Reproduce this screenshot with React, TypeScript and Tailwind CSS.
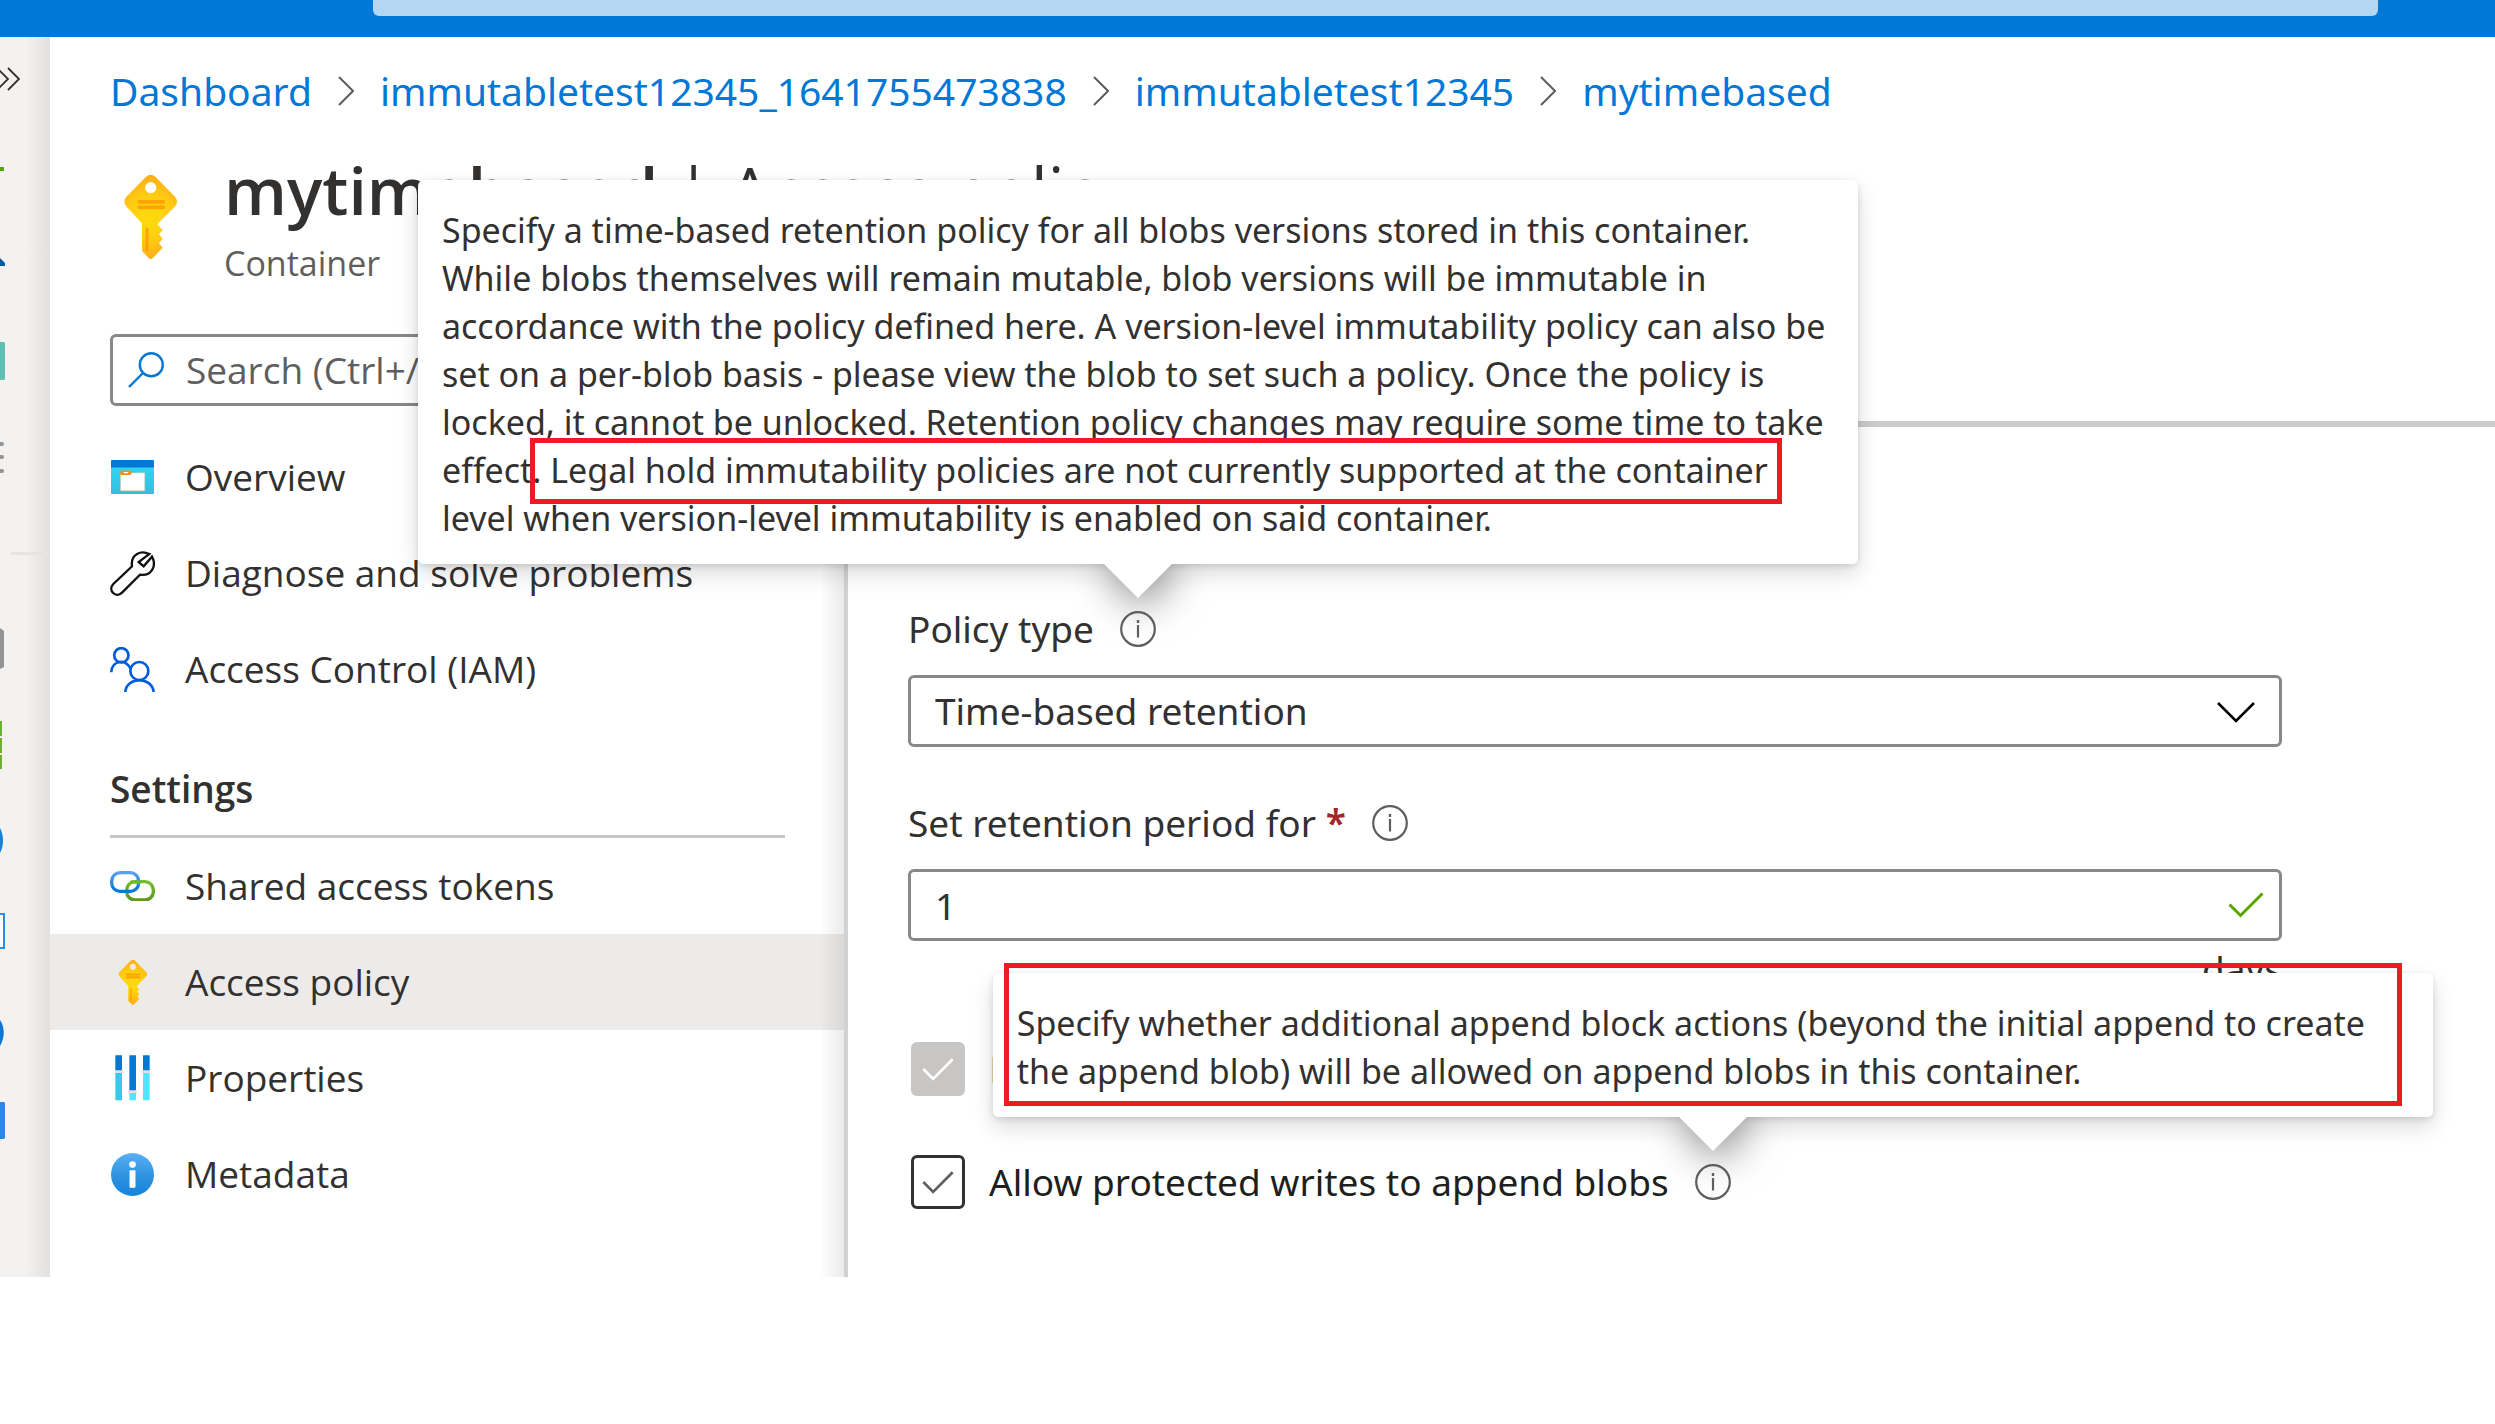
import { useState } from "react";
import type { ReactNode } from "react";

function KeyIcon({ id, className }: { id: string; className: string }) {
  return (
    <svg viewBox="0 0 84 84" className={className} aria-hidden="true">
      <defs>
        <radialGradient id={id} gradientUnits="userSpaceOnUse" cx="42" cy="42" r="42">
          <stop offset="0.25" stopColor="#ffd70f" />
          <stop offset="0.55" stopColor="#ffcb12" />
          <stop offset="1" stopColor="#feac19" />
        </radialGradient>
      </defs>
      <path
        fill={`url(#${id})`}
        fillRule="evenodd"
        d="M38 1.8a6.600 6.600 0 0 1 9.400 0L67 21.800a6.800 6.800 0 0 1 0 9.600L50 48.500v1.500l4.700 5-3.700 4.200 3.700 4.600-3.700 4.400 3.700 4.600L45 82.800a3.200 3.200 0 0 1-4.600 0L34 76V48.500L18.400 31.400a6.800 6.800 0 0 1 0-9.600ZM42.700 7a5.600 5.600 0 1 0 0 11.200 5.600 5.600 0 0 0 0-11.200Z"
      />
      <rect x="29.500" y="25" width="27.500" height="3.800" rx="1.800" fill="#ff9300" opacity="0.75" />
      <rect x="29.500" y="30.500" width="27.500" height="3.800" rx="1.800" fill="#ff9300" opacity="0.75" />
      <rect x="37.500" y="52.500" width="3" height="24" rx="1.500" fill="#ff9300" opacity="0.75" />
    </svg>
  );
}

function OverviewIcon() {
  return (
    <svg viewBox="0 0 130 104" className="w-[43px]" aria-hidden="true">
      <defs>
        <linearGradient id="ov" x1="0" y1="0" x2="0" y2="1">
          <stop offset="0.2" stopColor="#32d4f5" />
          <stop offset="1" stopColor="#32bedd" />
        </linearGradient>
      </defs>
      <rect width="130" height="104" rx="4" fill="url(#ov)" />
      <path d="M4 0h122a4 4 0 0 1 4 4v19H0V4a4 4 0 0 1 4-4Z" fill="#0078d4" />
      <path d="M29 39h73v54H29Z" fill="#fff" stroke="#d8cfae" strokeWidth="2" />
      <path d="M30 32h27l7 6-6 7H30a2 2 0 0 1-2-2v-9a2 2 0 0 1 2-2Z" fill="#f78d1e" />
      <rect x="38" y="36" width="14" height="4" rx="2" fill="#fff" />
    </svg>
  );
}

function WrenchIcon() {
  return (
    <svg viewBox="0 0 135 135" className="w-[45px]" fill="none" stroke="#111" strokeWidth="7" aria-hidden="true">
      <path d="M118 9C94-3 61 8 66 46L10 99C-8 118 18 143 36 125L90 71c34 5 51-26 36-54l-25 29-15-13Z" />
    </svg>
  );
}

function PeopleIcon() {
  return (
    <svg viewBox="0 0 135 135" className="w-[45px]" fill="none" stroke="#015cda" strokeWidth="8" aria-hidden="true">
      <circle cx="34" cy="25" r="21.500" />
      <path d="M4 76C5 38 52 34 63 68" />
      <circle cx="88" cy="72" r="27" />
      <path d="M46 135c3-47 80-47 85 0" />
    </svg>
  );
}

function LinkIcon() {
  return (
    <svg viewBox="0 0 135 92" className="w-[45px]" fill="none" strokeWidth="10" aria-hidden="true">
      <defs>
        <linearGradient id="lb" x1="0" y1="0" x2="0" y2="1">
          <stop offset="0" stopColor="#5ea0ef" />
          <stop offset="1" stopColor="#0078d4" />
        </linearGradient>
        <linearGradient id="lg" x1="0" y1="0" x2="0" y2="1">
          <stop offset="0" stopColor="#76bc2d" />
          <stop offset="1" stopColor="#5e9624" />
        </linearGradient>
      </defs>
      <rect x="50" y="32" width="80" height="55" rx="25" stroke="url(#lg)" />
      <rect x="5" y="5" width="81" height="56" rx="25" stroke="url(#lb)" />
      <path d="M62 33h30" stroke="#74b92c" />
    </svg>
  );
}

function PropertiesIcon() {
  return (
    <svg viewBox="0 0 105 136" className="w-[35px]" aria-hidden="true">
      <path d="M1 1h20v47H1ZM43 1h20v108H43ZM84 1h20v47H84Z" fill="#0078d4" />
      <path d="M1 54h20v82H1Z" fill="#38c9e8" />
      <path d="M43 114h20v22H43ZM84 54h20v82H84Z" fill="#50e6ff" />
      <path d="M-2 46h27v8H-2ZM39 106h27v8H39ZM81 46h27v8H81Z" fill="#e0e0e0" />
    </svg>
  );
}

function MetadataIcon() {
  return (
    <svg viewBox="0 0 130 130" className="w-[43px]" aria-hidden="true">
      <defs>
        <linearGradient id="md" x1="0" y1="0" x2="0" y2="1">
          <stop offset="0" stopColor="#5ab0f5" />
          <stop offset="0.500" stopColor="#3094e0" />
          <stop offset="1" stopColor="#1583da" />
        </linearGradient>
      </defs>
      <circle cx="65" cy="65" r="65" fill="url(#md)" />
      <circle cx="65" cy="35" r="10" fill="#fff" />
      <rect x="56" y="52" width="18" height="53" rx="3" fill="#fff" />
    </svg>
  );
}

function InfoIcon() {
  return (
    <svg viewBox="0 0 36 36" className="size-9" fill="none" stroke="#605e5c" aria-hidden="true">
      <circle cx="18" cy="18" r="16.800" strokeWidth="2.200" />
      <path d="M18 14v12.500" strokeWidth="2.200" />
      <path d="M18 9v3" strokeWidth="2.400" />
    </svg>
  );
}

function Check({ className }: { className: string }) {
  return (
    <svg viewBox="0 0 36 28" className={className} fill="none" stroke="currentColor" aria-hidden="true">
      <path d="M1.500 13.500 12.500 24.500 34.500 2.500" strokeWidth="3" />
    </svg>
  );
}

function Crumb({ children, last }: { children: string; last?: boolean }) {
  return (
    <li className="flex items-center gap-[26px]">
      <a href="#" className="text-[#0078d7]">{children}</a>
      {!last && (
        <svg viewBox="0 0 16 30" className="mr-[26px] h-[30px] w-4" fill="none" stroke="#605e5c" strokeWidth="2" aria-hidden="true">
          <path d="M1 1 15 15 1 29" />
        </svg>
      )}
    </li>
  );
}

function InfoTip({ label, children, mark }: { label: string; children: ReactNode; mark: string }) {
  return (
    <div className="relative flex">
      <button type="button" aria-label={label} className="relative z-20 block">
        <InfoIcon />
      </button>
      <div role="tooltip" className="absolute bottom-full left-1/2 z-10 mb-[47px] w-[1440px] -translate-x-1/2 rounded-md shadow-[0_10px_22px_rgba(0,0,0,0.14),0_2px_6px_rgba(0,0,0,0.12)]">
        <div className="absolute -bottom-6 left-1/2 size-12 -translate-x-1/2 rotate-45 bg-white shadow-[8px_4px_40px_rgba(0,0,0,0.5)]" />
        <p className="relative rounded-md bg-white px-6 pt-[26px] pb-[22px] text-[34px] leading-[48px] whitespace-nowrap">{children}</p>
        <div className={mark} />
      </div>
    </div>
  );
}

const railIcons: ReactNode[] = [
  <path key="a" d="M0 22h4v4H0Z" fill="#57a300" />,
  <path key="b" d="M0 17 5 22v3H0Z" fill="#005ba1" />,
  <path key="c" d="M0 5h4l1 1v36l-1 1H0Z" fill="#5fbfb3" />,
  <path key="d" d="M0 9h2a2 2 0 0 1 0 4H0ZM0 22h2a2 2 0 0 1 0 4H0ZM0 36h2a2 2 0 0 1 0 4H0Z" fill="#949494" />,
  null,
  <path key="f" d="M0 3 4 6v36L0 44Z" fill="#949494" />,
  <path key="g" d="M0 0h2v15H0ZM0 17h2v15H0ZM0 34h2v14H0Z" fill="#6fb02a" />,
  <path key="h" d="M0 11C4 18 4 29 0 36Z" fill="#1a80d9" />,
  <path key="i" d="M0 1h4v34H0" stroke="#2f8be2" strokeWidth="2" fill="#fff" />,
  <path key="j" d="M0 11C5 18 5 29 0 37Z" fill="#0f77d1" />,
  <path key="k" d="M0-3h4l1 1v35l-1 1H0Z" fill="#2f88e0" />,
];

function NavItem({ icon, label, active }: { icon: ReactNode; label: string; active?: boolean }) {
  return (
    <li>
      <a
        href="#"
        aria-current={active ? "page" : undefined}
        className={active ? "flex h-24 items-center gap-[30px] bg-[#edebe9] pl-[60px]" : "flex h-24 items-center gap-[30px] pl-[60px]"}
      >
        <span className="flex w-[45px] justify-center">{icon}</span>
        {label}
      </a>
    </li>
  );
}

export default function App() {
  const [allow, setAllow] = useState(true);
  return (
    <div className="bg-white font-['Open_Sans',sans-serif] text-[37px] leading-[48px] text-[#323130]">
      <div className="h-[37px] bg-[#0078d7] pr-[117px] pl-[373px]">
        <div className="h-4 rounded-b-md bg-[#b3d6f2]" />
      </div>
      <div className="flex overflow-hidden">
        <aside className="w-[50px] shrink-0 bg-[#f3f2f1] bg-linear-to-r from-[#f3f2f1] from-50% to-[#e2e1e0]">
          <button type="button" aria-label="Expand menu" className="flex h-[84px] items-center">
            <svg viewBox="0 0 20 24" className="h-6 w-5" fill="none" stroke="#323130" strokeWidth="1.800" aria-hidden="true">
              <path d="M-3 1 8 12-3 23M8 1 19 12 8 23" />
            </svg>
          </button>
          {railIcons.map((icon, i) =>
            icon ? (
              <a key={i} href="#" aria-label={`Favorite ${i + 1}`} className="flex h-24 items-center">
                <svg viewBox="0 0 5 48" className="h-12 w-[5px] overflow-visible">{icon}</svg>
              </a>
            ) : (
              <div key={i} className="flex h-24 items-center pl-[11px]">
                <hr className="h-[3px] w-full border-0 bg-[#e6e4e3]" />
              </div>
            ),
          )}
        </aside>

        <main className="min-w-0 flex-1">
          <header className="pt-6 pl-[58px]">
            <nav aria-label="Breadcrumb" className="pl-0.5 font-['Noto_Sans',sans-serif]">
              <ol className="flex h-[60px] items-center text-[39px]">
                <Crumb>Dashboard</Crumb>
                <Crumb>immutabletest12345_1641755473838</Crumb>
                <Crumb>immutabletest12345</Crumb>
                <Crumb last>mytimebased</Crumb>
              </ol>
            </nav>
            <div className="mt-7 flex h-[140px] gap-8">
              <KeyIcon id="keyLarge" className="mt-[26px] size-[84px]" />
              <div>
                <h1 className="text-[66px] leading-[80px] font-semibold">
                  mytimebased <span className="font-normal">| Access policy</span>
                </h1>
                <p className="mt-2.5 text-[34px] text-[#605e5c]">Container</p>
              </div>
            </div>
          </header>

          <div className="mt-[45px] flex">
            <div className="relative w-[794px] shrink-0">
              <label className="mr-[59px] ml-[60px] flex h-[72px] items-center gap-[22px] rounded-md border-[3px] border-[#8a8886] pl-[15px]">
                <svg viewBox="0 0 36 36" className="size-9 shrink-0" fill="none" stroke="#0078d4" strokeWidth="2.400" aria-hidden="true">
                  <circle cx="23.300" cy="12.700" r="11.500" />
                  <path d="M15 21 1 35" />
                </svg>
                <input
                  type="text"
                  aria-label="Search"
                  placeholder="Search (Ctrl+/)"
                  className="min-w-0 flex-1 bg-transparent outline-none placeholder:text-[#605e5c]"
                />
              </label>
              <ul className="mt-[23px]">
                <NavItem icon={<OverviewIcon />} label="Overview" />
                <NavItem icon={<WrenchIcon />} label="Diagnose and solve problems" />
                <NavItem icon={<PeopleIcon />} label="Access Control (IAM)" />
              </ul>
              <h2 className="mr-[59px] ml-[60px] border-b-[3px] border-[#c8c6c4] pt-12 pb-[22px] font-semibold">Settings</h2>
              <ul>
                <NavItem icon={<LinkIcon />} label="Shared access tokens" />
                <NavItem icon={<KeyIcon id="keySmall" className="size-[45px]" />} label="Access policy" active />
                <NavItem icon={<PropertiesIcon />} label="Properties" />
                <NavItem icon={<MetadataIcon />} label="Metadata" />
              </ul>
              <div className="absolute top-[87px] right-0 bottom-0 w-6 bg-linear-to-r from-black/0 to-black/8" />
            </div>

            <div className="flex min-w-0 flex-1 flex-col pt-[87px] font-['Noto_Sans',sans-serif]">
              <div className="flex-1 border-t-[6px] border-l-4 border-t-[#cbcbcb] border-l-[#d2d2d2] pt-[178px] pr-[213px] pb-[68px] pl-[60px]">
                <div className="flex items-center gap-[26px]">
                  <label htmlFor="policy-type">Policy type</label>
                  <InfoTip
                    label="About policy type"
                    mark="absolute top-[258px] left-[112px] h-[66px] w-[1252px] border-[5px] border-[#ed1c24]"
                  >
                    Specify a time-based retention policy for all blobs versions stored in this container.
                    <br />
                    While blobs themselves will remain mutable, blob versions will be immutable in
                    <br />
                    accordance with the policy defined here. A version-level immutability policy can also be
                    <br />
                    set on a per-blob basis - please view the blob to set such a policy. Once the policy is
                    <br />
                    locked, it cannot be unlocked. Retention policy changes may require some time to take
                    <br />
                    effect. Legal hold immutability policies are not currently supported at the container
                    <br />
                    level when version-level immutability is enabled on said container.
                  </InfoTip>
                </div>
                <div className="relative mt-[22px]">
                  <select
                    id="policy-type"
                    className="block h-[72px] w-full appearance-none rounded-md border-[3px] border-[#8a8886] bg-white pl-6 outline-none"
                  >
                    <option>Time-based retention</option>
                  </select>
                  <svg viewBox="0 0 38 21" className="pointer-events-none absolute top-[27px] right-[27px] h-[21px] w-[38px]" fill="none" stroke="#000" strokeWidth="2.600" aria-hidden="true">
                    <path d="M1 1 19 19 37 1" />
                  </svg>
                </div>

                <div className="mt-[52px] flex items-center gap-[26px]">
                  <label htmlFor="retention">
                    Set retention period for <span className="font-semibold text-[#a4262c]">*</span>
                  </label>
                  <button type="button" aria-label="About retention period">
                    <InfoIcon />
                  </button>
                </div>
                <div className="relative mt-[22px]">
                  <input
                    id="retention"
                    type="text"
                    defaultValue="1"
                    className="block h-[72px] w-full rounded-md border-[3px] border-[#8a8886] bg-white pl-6 outline-none"
                  />
                  <Check className="pointer-events-none absolute top-[22px] right-[18px] h-7 w-9 text-[#57a300]" />
                </div>
                <p className="mt-1 text-right">days</p>

                <div className="mt-[49px] flex h-[54px] items-center gap-6 pl-[3px]">
                  <span className="relative flex">
                    <input id="version-level" type="checkbox" checked disabled readOnly className="size-[54px] appearance-none rounded-md bg-[#c8c6c4]" />
                    <Check className="pointer-events-none absolute top-[15px] left-[11px] h-[25px] w-8 text-white" />
                  </span>
                  <label htmlFor="version-level" className="text-[#a19f9d]">Enable version-level immutability</label>
                </div>

                <div className="mt-[59px] flex h-[54px] items-center gap-6 pl-[3px]">
                  <span className="relative flex">
                    <input
                      id="append-writes"
                      type="checkbox"
                      checked={allow}
                      onChange={(e) => setAllow(e.target.checked)}
                      className="size-[54px] appearance-none rounded-md border-[3px] border-[#323130] bg-white"
                    />
                    {allow && <Check className="pointer-events-none absolute top-[15px] left-[11px] h-[25px] w-8 text-[#605e5c]" />}
                  </span>
                  <div className="flex items-center gap-[26px]">
                    <label htmlFor="append-writes" className="text-[#201f1e]">Allow protected writes to append blobs</label>
                    <InfoTip
                      label="About protected append writes"
                      mark="absolute -top-2.5 left-[11px] h-[143px] w-[1398px] border-[5px] border-[#ed1c24]"
                    >
                      Specify whether additional append block actions (beyond the initial append to create
                      <br />
                      the append blob) will be allowed on append blobs in this container.
                    </InfoTip>
                  </div>
                </div>
              </div>
            </div>
          </div>
        </main>
      </div>
    </div>
  );
}
